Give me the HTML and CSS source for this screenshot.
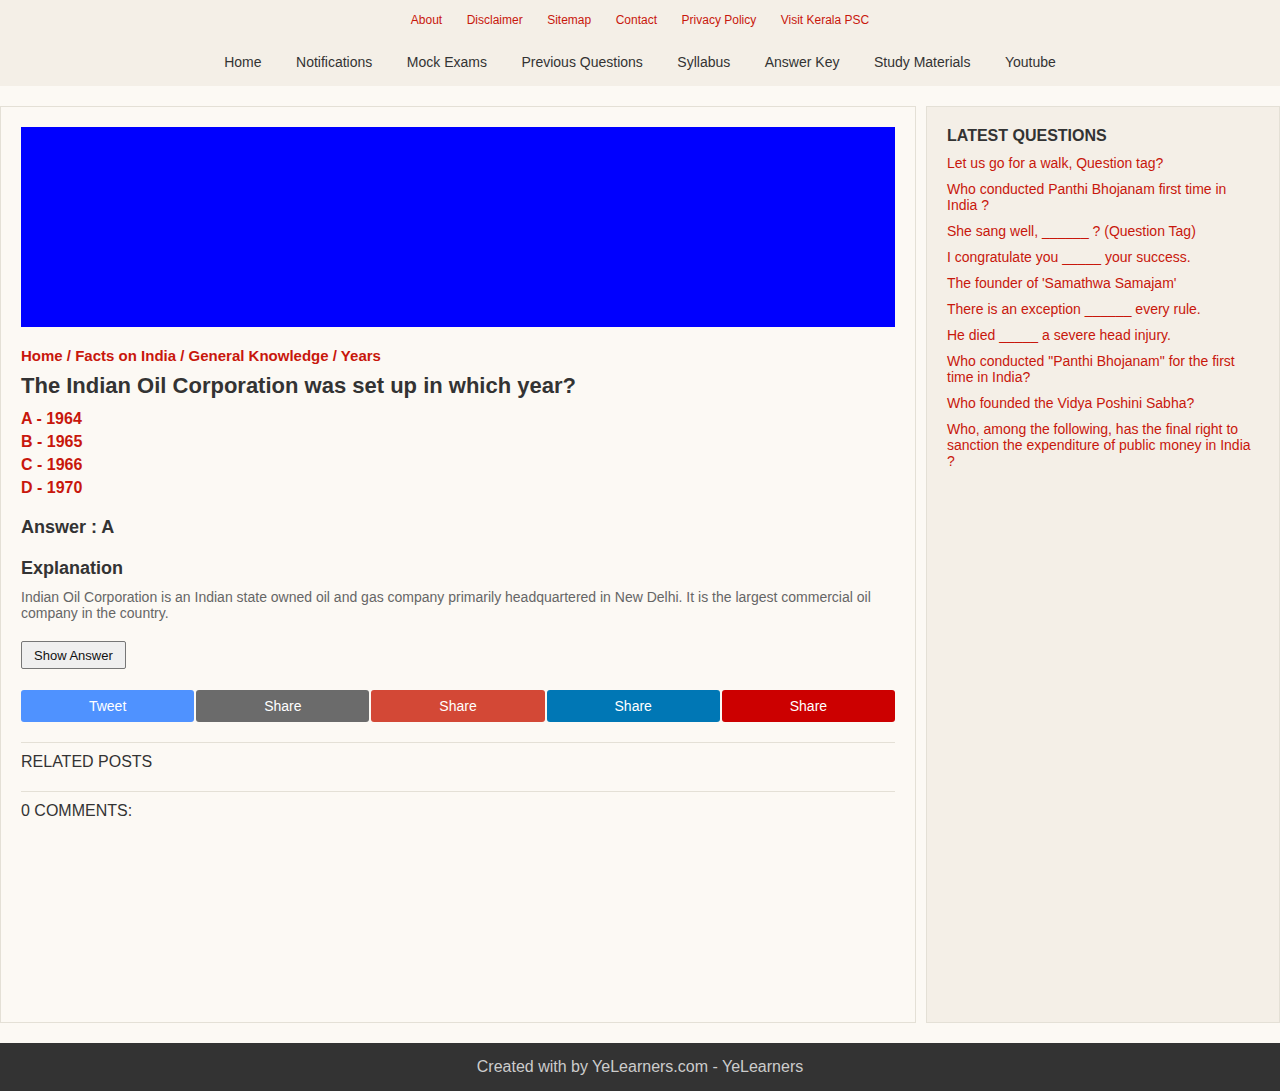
FILE: index.html
```html
<!DOCTYPE html>
<html lang="en">
<head>
<meta charset="utf-8">
<title>The Indian Oil Corporation was set up in which year?</title>
<link rel="stylesheet" href="styles.css">
</head>
<body>
<header class="header">
  <nav class="topnav">
    <a href="#">About</a>
    <a href="#">Disclaimer</a>
    <a href="#">Sitemap</a>
    <a href="#">Contact</a>
    <a href="#">Privacy Policy</a>
    <a href="#">Visit Kerala PSC</a>
  </nav>
  <nav class="mainnav">
    <a href="#">Home</a>
    <a href="#">Notifications</a>
    <a href="#">Mock Exams</a>
    <a href="#">Previous Questions</a>
    <a href="#">Syllabus</a>
    <a href="#">Answer Key</a>
    <a href="#">Study Materials</a>
    <a href="#">Youtube</a>
  </nav>
</header>

<div class="layout">
  <main class="main">
    <div class="ad"></div>
    <div class="crumbs"><a href="#">Home</a> / <a href="#">Facts on India</a> / <a href="#">General Knowledge</a> / <a href="#">Years</a></div>
    <h1 class="title">The Indian Oil Corporation was set up in which year?</h1>
    <ul class="options">
      <li>A - 1964</li>
      <li>B - 1965</li>
      <li>C - 1966</li>
      <li>D - 1970</li>
    </ul>
    <h3 class="answer">Answer : A</h3>
    <h3 class="expl-title">Explanation</h3>
    <p class="expl">Indian Oil Corporation is an Indian state owned oil and gas company primarily headquartered in New Delhi. It is the largest commercial oil company in the country.</p>
    <button class="show-btn" type="button">Show Answer</button>
    <div class="share">
      <a href="#" class="sh sh-tw">Tweet</a>
      <a href="#" class="sh sh-gray">Share</a>
      <a href="#" class="sh sh-gp">Share</a>
      <a href="#" class="sh sh-li">Share</a>
      <a href="#" class="sh sh-pin">Share</a>
    </div>
    <div class="section">RELATED POSTS</div>
    <div class="section">0 COMMENTS:</div>
  </main>

  <aside class="sidebar">
    <h2 class="side-title">LATEST QUESTIONS</h2>
    <ul class="side-list">
      <li><a href="#">Let us go for a walk, Question tag?</a></li>
      <li><a href="#">Who conducted Panthi Bhojanam first time in India ?</a></li>
      <li><a href="#">She sang well, ______ ? (Question Tag)</a></li>
      <li><a href="#">I congratulate you _____ your success.</a></li>
      <li><a href="#">The founder of 'Samathwa Samajam'</a></li>
      <li><a href="#">There is an exception ______ every rule.</a></li>
      <li><a href="#">He died _____ a severe head injury.</a></li>
      <li><a href="#">Who conducted "Panthi Bhojanam" for the first time in India?</a></li>
      <li><a href="#">Who founded the Vidya Poshini Sabha?</a></li>
      <li><a href="#">Who, among the following, has the final right to sanction the expenditure of public money in India ?</a></li>
    </ul>
  </aside>
</div>

<footer class="footer">Created with by YeLearners.com - YeLearners</footer>
</body>
</html>
```

FILE: styles.css
```css
* { box-sizing: border-box; }

html, body {
  margin: 0;
  padding: 0;
}

body {
  background: #fcf9f4;
  font-family: "Liberation Sans", Arial, sans-serif;
  color: #333;
}

a { text-decoration: none; }

.header {
  background: #f4efe7;
  height: 86px;
}

.topnav {
  height: 40px;
  display: flex;
  justify-content: center;
  align-items: center;
  gap: 24.5px;
  font-size: 12px;
}

.topnav a { color: #c8170c; }

.mainnav {
  height: 44px;
  display: flex;
  justify-content: center;
  align-items: center;
  gap: 34.5px;
  font-size: 14px;
}

.mainnav a { color: #333; }

.layout {
  display: flex;
  gap: 10px;
  margin-top: 20px;
  min-height: 917px;
}

.main {
  width: 916px;
  flex: none;
  border: 1px solid #e4e0d6;
  padding: 20px;
  background: #fcf9f4;
}

.ad {
  height: 200px;
  background: #0000ff;
}

.crumbs {
  margin-top: 20px;
  font-size: 15px;
  line-height: 18px;
  font-weight: bold;
  color: #c8170c;
}

.crumbs a { color: #c8170c; }

.title {
  margin: 8px 0 0;
  font-size: 22px;
  line-height: 26px;
  font-weight: bold;
  color: #333;
}

.options {
  list-style: none;
  margin: 8px 0 0;
  padding: 0;
  font-size: 16px;
  line-height: 23px;
  font-weight: bold;
  color: #c8170c;
}

.answer {
  margin: 17px 0 0;
  font-size: 18px;
  line-height: 22px;
  font-weight: bold;
  color: #333;
}

.expl-title {
  margin: 19px 0 0;
  font-size: 18px;
  line-height: 22px;
  font-weight: bold;
  color: #333;
}

.expl {
  margin: 10px 0 0;
  font-size: 14px;
  line-height: 16px;
  color: #666;
}

.show-btn {
  display: block;
  margin-top: 20px;
  height: 28px;
  padding: 0 12px;
  font-family: "Liberation Sans", Arial, sans-serif;
  font-size: 13px;
  color: #111;
  background: #efefef;
  border: 1px solid #767676;
  border-radius: 2px;
}

.share {
  display: flex;
  gap: 2px;
  margin-top: 21px;
}

.sh {
  flex: 1;
  height: 32px;
  line-height: 32px;
  text-align: center;
  color: #fff;
  font-size: 14px;
  border-radius: 3px;
}

.sh-tw { background: #4f92ff; }
.sh-gray { background: #6b6b6b; }
.sh-gp { background: #d34836; }
.sh-li { background: #0077b5; }
.sh-pin { background: #cc0000; }

.section {
  margin-top: 20px;
  border-top: 1px solid #e4e0d6;
  padding-top: 10px;
  font-size: 16px;
  line-height: 18px;
  color: #333;
}

.sidebar {
  flex: 1;
  background: #f4efe7;
  border: 1px solid #e4e0d6;
  padding: 20px 20px;
}

.side-title {
  margin: 0;
  font-size: 16px;
  line-height: 18px;
  font-weight: bold;
  color: #333;
}

.side-list {
  list-style: none;
  margin: 10px 0 0;
  padding: 0;
  font-size: 14px;
  line-height: 16px;
}

.side-list li { margin-bottom: 10px; }

.side-list a { color: #c8170c; }

.footer {
  margin-top: 20px;
  height: 48px;
  line-height: 48px;
  background: #333;
  color: #ccc;
  text-align: center;
  font-size: 16px;
}
```
